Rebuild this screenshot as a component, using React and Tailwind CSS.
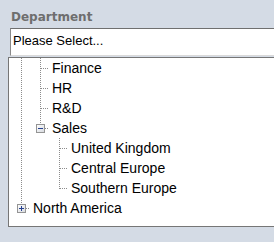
const ROWS = [
  { cells: ["pipe", "tee"], label: "Finance" },
  { cells: ["pipe", "tee"], label: "HR" },
  { cells: ["pipe", "tee"], label: "R&D" },
  { cells: ["pipe", "minus"], label: "Sales" },
  { cells: ["pipe", "blank", "tee"], label: "United Kingdom" },
  { cells: ["pipe", "blank", "tee"], label: "Central Europe" },
  { cells: ["pipe", "blank", "elbow"], label: "Southern Europe" },
  { cells: ["plus"], label: "North America" },
];

// dotted connector segment
function Dot(props) {
  return <line {...props} stroke="#8c8c8c" strokeWidth="1" strokeDasharray="1 1" shapeRendering="crispEdges" />;
}

function Cell({ kind }) {
  const box = kind === "plus" || kind === "minus";
  return (
    <svg width="19" height="20" viewBox="0 0 19 20" className="shrink-0">
      {(kind === "pipe" || kind === "tee") && <Dot x1="10.5" y1="0" x2="10.5" y2="20" />}
      {kind === "elbow" && <Dot x1="10.5" y1="0" x2="10.5" y2="11" />}
      {(kind === "tee" || kind === "elbow") && <Dot x1="11" y1="10.5" x2="19" y2="10.5" />}
      {box && (
        <>
          <defs>
            <linearGradient id={`g-${kind}`} x1="0" y1="0" x2="1" y2="1">
              <stop offset="0" stopColor="#ffffff" />
              <stop offset="1" stopColor="#d6d9de" />
            </linearGradient>
          </defs>
          <Dot x1="10.5" y1="0" x2="10.5" y2="6" />
          <Dot x1="15" y1="10.5" x2="19" y2="10.5" />
          <rect x="6.5" y="6.5" width="8" height="8" fill={`url(#g-${kind})`} stroke="#949494" shapeRendering="crispEdges" />
          <line x1="8" y1="10.5" x2="13" y2="10.5" stroke="#25408f" shapeRendering="crispEdges" />
          {kind === "plus" && <line x1="10.5" y1="8" x2="10.5" y2="13" stroke="#25408f" shapeRendering="crispEdges" />}
        </>
      )}
    </svg>
  );
}

export default function App() {
  return (
    <div className="flex h-[242px] w-[274px] flex-col items-start overflow-hidden bg-[#d4dbe5] pl-[8px] pt-[9px]">
      <div className="ml-[3px] mb-[3px] text-[12px] font-bold leading-[16px] text-[#6e6e6e] [font-family:'DejaVu_Sans',sans-serif]">
        Department
      </div>

      <div className="ml-[2px] h-[28px] w-[300px] shrink-0 border-t border-l border-b border-t-[#6f6f6f] border-l-[#8a8a8a] border-b-[#dadada] bg-white pl-[2px] text-[13px] leading-[24px] text-black [font-family:'Liberation_Sans',Arial,sans-serif]">
        Please Select...
      </div>

      <div className="mt-[1px] w-[300px] shrink-0 border-t border-l border-b border-[#767676] bg-white pb-[8px] pl-[2px] text-[14px] leading-[20px] text-black [font-family:'Liberation_Sans',Arial,sans-serif]">
        {ROWS.map((row) => (
          <div key={row.label} className="flex h-[20px] items-center">
            {row.cells.map((c, i) => (
              <Cell key={i} kind={c} />
            ))}
            <span className="ml-[3px] whitespace-nowrap">{row.label}</span>
          </div>
        ))}
      </div>
    </div>
  );
}
